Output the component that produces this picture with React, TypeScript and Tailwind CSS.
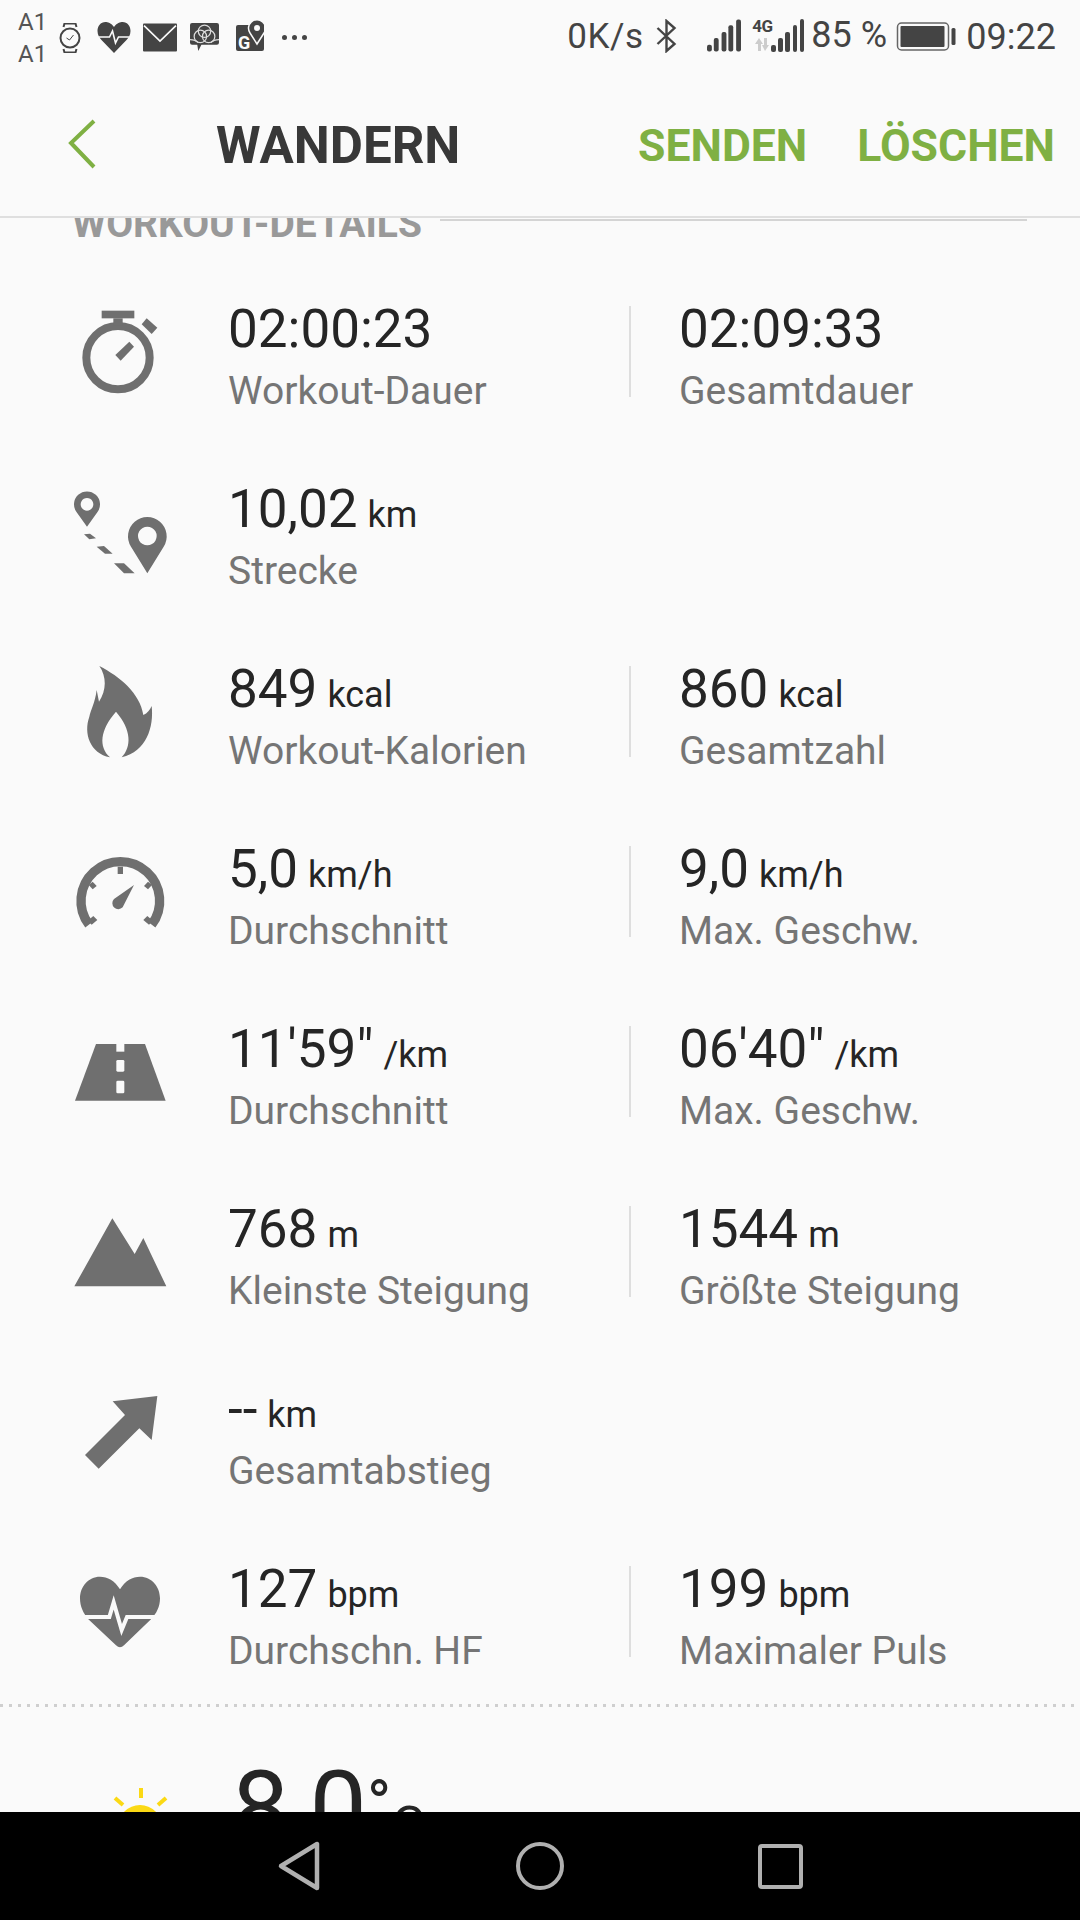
import React from "react";

const G = "#6f6f6f";

function Ico({ vb, children }: { vb: string; children: React.ReactNode }) {
  return (
    <svg width="140" height="180" viewBox={vb} className="ml-[50px] shrink-0">
      <g fill={G}>{children}</g>
    </svg>
  );
}

const Stopwatch = () => (
  <Ico vb="0 -87 420 540">
    <circle cx="204" cy="203" r="95" fill="none" stroke={G} strokeWidth="24" />
    <rect x="155" y="62" width="98" height="23" />
    <rect x="190" y="85" width="28" height="22" />
    <polygon points="290,85 322,113 305,132 275,103" />
    <polygon points="238,155 252,170 212,212 196,195" />
  </Ico>
);
const Route = () => (
  <Ico vb="0 453 420 540">
    <path fillRule="evenodd" d="M111 710 L80 667 A39 39 0 1 1 142 667 Z M111 624 a19 19 0 1 0 .01 0 Z" />
    <path fillRule="evenodd" d="M292 850 L243 770 A58 58 0 1 1 341 770 Z M292 710 a28 28 0 1 0 .01 0 Z" />
    <polygon points="102,733 120,731 138,745 118,748" />
    <polygon points="140,770 162,768 188,791 165,791" />
    <polygon points="192,820 222,820 254,850 222,850" />
  </Ico>
);
const Flame = () => (
  <Ico vb="0 993 420 540">
    <path d="M148 1128 C210 1160 270 1210 280 1275 C292 1270 300 1260 305 1248 C312 1310 290 1385 215 1402 C245 1370 245 1320 198 1265 C150 1320 145 1370 180 1402 C120 1390 100 1330 118 1280 C122 1260 135 1240 140 1200 L147 1235 C170 1200 170 1160 148 1128 Z" />
  </Ico>
);
const Speed = () => (
  <Ico vb="0 -87 420 540">
    <path d="M117 284 A118 118 0 1 1 305 284" fill="none" stroke={G} strokeWidth="28" />
    <rect x="203" y="110" width="16" height="22" />
    <polygon points="128,155 140,168 128,178 116,165" />
    <polygon points="294,155 306,165 294,178 282,168" />
    <polygon points="130,258 142,270 125,284 113,272" />
    <polygon points="292,258 280,270 297,284 309,272" />
    <path d="M252 165 L218 232 A17 17 0 1 1 192 207 Z" />
  </Ico>
);
const Road = () => (
  <Ico vb="0 453 420 540">
    <polygon points="138,642 285,642 347,812 75,812" />
    <rect x="199" y="636" width="24" height="29" fill="#fafafa" />
    <rect x="199" y="690" width="24" height="35" rx="4" fill="#fafafa" />
    <rect x="199" y="752" width="24" height="38" rx="4" fill="#fafafa" />
  </Ico>
);
const Mountain = () => (
  <Ico vb="0 993 420 540">
    <polygon points="187,1165 254,1272 280,1224 349,1369 73,1369" />
  </Ico>
);
const Arrow = () => (
  <Ico vb="0 -87 420 540">
    <polygon points="322,78 305,210 268,175 146,296 105,255 225,135 188,94" />
  </Ico>
);
const Heart = () => (
  <Ico vb="0 453 420 540">
    <path d="M210 658 C225 632 248 620 270 620 C305 620 330 650 330 685 C330 710 320 730 303 748 L222 826 Q210 838 198 826 L115 748 C100 730 90 710 90 685 C90 650 115 620 150 620 C172 620 195 632 210 658 Z" />
    <polyline points="95,741 178,741 191,697 215,780 231,741 325,741" fill="none" stroke="#fafafa" strokeWidth="12" />
  </Ico>
);

function Cell({ v, u, l }: { v: string; u?: string; l: string }) {
  return (
    <div className="flex flex-col">
      <div className="h-[62px] leading-[62px] text-[53px] text-[#252525] whitespace-nowrap">
        {v}
        {u && <span className="text-[36px] ml-[10px]">{u}</span>}
      </div>
      <div className="h-[46px] leading-[46px] mt-[8px] text-[39px] text-[#757575] whitespace-nowrap">{l}</div>
    </div>
  );
}

function Row({ icon, a, b }: { icon: React.ReactNode; a: [string, string | undefined, string]; b?: [string, string | undefined, string] }) {
  return (
    <div className="flex h-[180px] items-center">
      <div className="w-[228px] shrink-0 flex">{icon}</div>
      <div className="w-[401px] shrink-0 self-start pt-[37px]">
        <Cell v={a[0]} u={a[1]} l={a[2]} />
      </div>
      {b && (
        <>
          <div className="w-[2px] h-[91px] bg-[#dedede] shrink-0" />
          <div className="pl-[48px] self-start pt-[37px]">
            <Cell v={b[0]} u={b[1]} l={b[2]} />
          </div>
        </>
      )}
    </div>
  );
}

function StatusBar() {
  const c = "#444444";
  return (
    <div className="h-[72px] flex items-start pl-[18px] text-[#444444] shrink-0">
      <div className="w-[27px] flex flex-col text-[24px] leading-[32px] pt-[6px] text-[#555555]">
        <span>A1</span>
        <span>A1</span>
      </div>
      <svg width="24" height="30" viewBox="0 0 23 30" className="ml-[13px] mt-[23px]">
        <circle cx="11.5" cy="15" r="9.5" fill="none" stroke={c} strokeWidth="2" />
        <path d="M5 4 L6 0.5 H17 L18 4 M5 26 L6 29.5 H17 L18 26" fill="none" stroke={c} strokeWidth="2" />
        <path d="M8 15 L11 17 L15 12" fill="none" stroke={c} strokeWidth="1" />
      </svg>
      <svg width="34" height="31" viewBox="0 0 33 31" className="ml-[15px] mt-[22px]">
        <path d="M16.5 5 C19 1 23 0 25 0 C30 0 33 4 33 9 C33 13 31 16 29 18 L16.5 31 L4 18 C2 16 0 13 0 9 C0 4 3 0 8 0 C10 0 14 1 16.5 5 Z" fill={c} />
        <polyline points="1,15 12,15 15,9 18,21 21,15 32,15" fill="none" stroke="#fafafa" strokeWidth="1.6" />
      </svg>
      <svg width="34" height="29" viewBox="0 0 33 27" className="ml-[12px] mt-[23px]">
        <rect width="33" height="27" rx="1" fill={c} />
        <polyline points="1,2 16.5,17 32,2" fill="none" stroke="#fafafa" strokeWidth="1.6" />
      </svg>
      <svg width="29" height="30" viewBox="0 0 28 29" className="ml-[13px] mt-[23px]">
        <path d="M2 0 H26 A2 2 0 0 1 28 2 V19 A2 2 0 0 1 26 21 H11 L8 27 L7 21 H2 A2 2 0 0 1 0 19 V2 A2 2 0 0 1 2 0 Z" fill={c} />
        <g fill="none" stroke="#dddddd" strokeWidth="1.2">
          <circle cx="14" cy="8" r="6" />
          <circle cx="10" cy="13" r="6" />
          <circle cx="18" cy="13" r="6" />
          <path d="M0 16 Q5 16 8 19 M28 16 Q23 16 20 19" />
        </g>
      </svg>
      <svg width="28" height="32" viewBox="0 0 28 32" className="ml-[17px] mt-[20px]">
        <path d="M2 5 H26 A2 2 0 0 1 28 7 V29 A2 2 0 0 1 26 31 H2 A2 2 0 0 1 0 29 V7 A2 2 0 0 1 2 5 Z" fill={c} />
        <path d="M21 24 L14 13 A8.5 8.5 0 1 1 28 13 Z" fill={c} stroke="#fafafa" strokeWidth="1.5" />
        <circle cx="21" cy="8" r="3" fill="#fafafa" />
        <text x="2" y="29" fontSize="18" fontWeight="700" fill="#fafafa" fontFamily="Roboto, sans-serif">G</text>
      </svg>
      <div className="ml-[18px] mt-[35px] flex gap-[5px]">
        <span className="w-[5px] h-[5px] rounded-full bg-[#444444]" />
        <span className="w-[5px] h-[5px] rounded-full bg-[#444444]" />
        <span className="w-[5px] h-[5px] rounded-full bg-[#444444]" />
      </div>

      <div className="ml-auto flex items-start pr-[24px]">
        <span className="text-[35px] leading-[40px] mt-[17px] w-[89px] tracking-[0.5px]">0K/s</span>
        <svg width="21" height="34" viewBox="0 0 20 34" className="mt-[19px]">
          <path d="M1 9 L18 25 L10 32 V2 L18 9 L1 25" fill="none" stroke={c} strokeWidth="2.4" />
        </svg>
        <svg width="34" height="34" viewBox="0 0 35 34" className="ml-[30px] mt-[19px]">
          <g fill={c}>
            <rect x="0" y="26" width="5" height="7" rx="2" />
            <rect x="7" y="19" width="5" height="14" rx="2" />
            <rect x="15" y="13" width="5" height="20" rx="2" />
            <rect x="22" y="6" width="5" height="27" rx="2" />
            <rect x="30" y="0" width="5" height="33" rx="2" />
          </g>
        </svg>
        <div className="ml-[12px] w-[18px] mt-[18px] flex flex-col items-center">
          <span className="text-[17px] leading-[17px] font-bold tracking-[-0.5px]">4G</span>
          <svg width="16" height="13" viewBox="0 0 16 13" className="mt-[3px]">
            <path d="M5 0 L9 6 H7 V13 H4 V6 H1 Z M11 13 L15 7 H13 V0 H10 V7 H8 Z" fill="#cccccc" />
          </svg>
        </div>
        <svg width="33" height="34" viewBox="0 0 33 34" className="mt-[19px]">
          <g fill={c}>
            <rect x="0" y="26" width="5" height="7" rx="2" />
            <rect x="7" y="19" width="5" height="14" rx="2" />
            <rect x="14" y="13" width="5" height="20" rx="2" />
            <rect x="22" y="6" width="4" height="27" rx="2" />
            <rect x="29" y="0" width="4" height="33" rx="2" />
          </g>
        </svg>
        <span className="text-[36px] leading-[40px] mt-[15px] ml-[7px] w-[85px] whitespace-pre">85 %</span>
        <svg width="60" height="29" viewBox="0 0 59 29" className="mt-[22px]">
          <rect x="1" y="1" width="51" height="27" rx="4" fill="none" stroke="#666666" strokeWidth="1.5" />
          <rect x="4" y="4" width="44" height="21" rx="1" fill={c} />
          <rect x="55" y="6" width="4" height="17" rx="1.5" fill={c} />
        </svg>
        <span className="text-[36px] leading-[40px] mt-[17px] ml-[10px]">09:22</span>
      </div>
    </div>
  );
}

function AppBar() {
  return (
    <div className="h-[146px] flex items-center border-b-[2px] border-[#dfdfdf] shrink-0 pt-[5px] font-bold">
      <svg width="30" height="52" viewBox="0 0 30 52" className="ml-[68px] mb-[4px]">
        <polyline points="26,2 3,24 26,48" fill="none" stroke="#7fb043" strokeWidth="4" />
      </svg>
      <span className="ml-[118px] text-[51px] text-[#383838]">WANDERN</span>
      <span className="ml-auto text-[44.5px] text-[#7fb043]">SENDEN</span>
      <span className="ml-[50px] mr-[25px] text-[44.5px] text-[#7fb043]">LÖSCHEN</span>
    </div>
  );
}

function Nav() {
  return (
    <div className="h-[108px] bg-black shrink-0 grid grid-cols-3 px-[180px] items-center justify-items-center">
      <svg width="46" height="52" viewBox="0 0 46 52">
        <path d="M4 26 L40 4 V48 Z" fill="none" stroke="#b0b0b0" strokeWidth="4.5" strokeLinejoin="round" />
      </svg>
      <div className="w-[48px] h-[48px] rounded-full border-[4px] border-[#b0b0b0]" />
      <div className="w-[45px] h-[45px] rounded-[4px] border-[4px] border-[#b0b0b0]" />
    </div>
  );
}

export default function App() {
  return (
    <div className="w-[1080px] h-[1920px] flex flex-col bg-[#fafafa] overflow-hidden font-[Roboto,sans-serif]">
      <StatusBar />
      <AppBar />
      <div className="flex-1 overflow-hidden">
        <div className="h-[43px] flex items-start overflow-visible">
          <span className="ml-[72px] mt-[-15px] text-[39px] leading-[42px] font-bold text-[#999999] whitespace-nowrap">WORKOUT-DETAILS</span>
          <div className="ml-[18px] mt-[1px] w-[587px] h-[2px] bg-[#d4d4d4]" />
        </div>
        <Row icon={<Stopwatch />} a={["02:00:23", undefined, "Workout-Dauer"]} b={["02:09:33", undefined, "Gesamtdauer"]} />
        <Row icon={<Route />} a={["10,02", "km", "Strecke"]} />
        <Row icon={<Flame />} a={["849", "kcal", "Workout-Kalorien"]} b={["860", "kcal", "Gesamtzahl"]} />
        <Row icon={<Speed />} a={["5,0", "km/h", "Durchschnitt"]} b={["9,0", "km/h", "Max. Geschw."]} />
        <Row icon={<Road />} a={["11'59\"", "/km", "Durchschnitt"]} b={["06'40\"", "/km", "Max. Geschw."]} />
        <Row icon={<Mountain />} a={["768", "m", "Kleinste Steigung"]} b={["1544", "m", "Größte Steigung"]} />
        <Row icon={<Arrow />} a={["--", "km", "Gesamtabstieg"]} />
        <Row icon={<Heart />} a={["127", "bpm", "Durchschn. HF"]} b={["199", "bpm", "Maximaler Puls"]} />
        <div className="mt-[3px] h-[3px] bg-[repeating-linear-gradient(90deg,#cfcfcf_0,#cfcfcf_3px,transparent_3px,transparent_9px)]" />
        <div className="flex items-start">
          <svg width="100" height="60" viewBox="0 0 100 60" className="ml-[90px] mt-[78px] shrink-0">
            <circle cx="20" cy="47" r="20" fill="#e0e0e0" />
            <circle cx="50" cy="42" r="22" fill="#fbd914" />
            <rect x="49" y="3" width="4" height="10" fill="#fbd914" />
            <line x1="25" y1="13" x2="33" y2="20" stroke="#fbd914" strokeWidth="4" />
            <line x1="76" y1="13" x2="68" y2="20" stroke="#fbd914" strokeWidth="4" />
          </svg>
          <div className="ml-[42px] mt-[39px] text-[102px] leading-[118px] text-[#252525] whitespace-nowrap">
            8,0<span className="text-[66px] align-[16px]">°</span>
            <span className="text-[52px]">C</span>
          </div>
        </div>
      </div>
      <Nav />
    </div>
  );
}
